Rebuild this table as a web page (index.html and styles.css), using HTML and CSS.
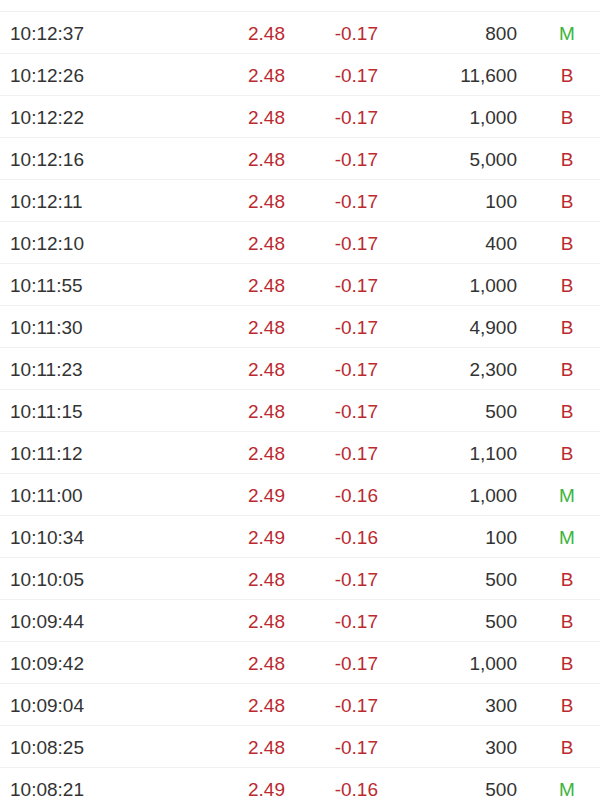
FILE: index.html
```html
<!DOCTYPE html>
<html>
<head>
<meta charset="utf-8">
<link rel="stylesheet" href="styles.css">
</head>
<body>
<div class="list">
  <div class="head"></div>
  <div class="row"><span class="t">10:12:37</span><span class="p">2.48</span><span class="c">-0.17</span><span class="v">800</span><span class="k m">M</span></div>
  <div class="row"><span class="t">10:12:26</span><span class="p">2.48</span><span class="c">-0.17</span><span class="v">11,600</span><span class="k b">B</span></div>
  <div class="row"><span class="t">10:12:22</span><span class="p">2.48</span><span class="c">-0.17</span><span class="v">1,000</span><span class="k b">B</span></div>
  <div class="row"><span class="t">10:12:16</span><span class="p">2.48</span><span class="c">-0.17</span><span class="v">5,000</span><span class="k b">B</span></div>
  <div class="row"><span class="t">10:12:11</span><span class="p">2.48</span><span class="c">-0.17</span><span class="v">100</span><span class="k b">B</span></div>
  <div class="row"><span class="t">10:12:10</span><span class="p">2.48</span><span class="c">-0.17</span><span class="v">400</span><span class="k b">B</span></div>
  <div class="row"><span class="t">10:11:55</span><span class="p">2.48</span><span class="c">-0.17</span><span class="v">1,000</span><span class="k b">B</span></div>
  <div class="row"><span class="t">10:11:30</span><span class="p">2.48</span><span class="c">-0.17</span><span class="v">4,900</span><span class="k b">B</span></div>
  <div class="row"><span class="t">10:11:23</span><span class="p">2.48</span><span class="c">-0.17</span><span class="v">2,300</span><span class="k b">B</span></div>
  <div class="row"><span class="t">10:11:15</span><span class="p">2.48</span><span class="c">-0.17</span><span class="v">500</span><span class="k b">B</span></div>
  <div class="row"><span class="t">10:11:12</span><span class="p">2.48</span><span class="c">-0.17</span><span class="v">1,100</span><span class="k b">B</span></div>
  <div class="row"><span class="t">10:11:00</span><span class="p">2.49</span><span class="c">-0.16</span><span class="v">1,000</span><span class="k m">M</span></div>
  <div class="row"><span class="t">10:10:34</span><span class="p">2.49</span><span class="c">-0.16</span><span class="v">100</span><span class="k m">M</span></div>
  <div class="row"><span class="t">10:10:05</span><span class="p">2.48</span><span class="c">-0.17</span><span class="v">500</span><span class="k b">B</span></div>
  <div class="row"><span class="t">10:09:44</span><span class="p">2.48</span><span class="c">-0.17</span><span class="v">500</span><span class="k b">B</span></div>
  <div class="row"><span class="t">10:09:42</span><span class="p">2.48</span><span class="c">-0.17</span><span class="v">1,000</span><span class="k b">B</span></div>
  <div class="row"><span class="t">10:09:04</span><span class="p">2.48</span><span class="c">-0.17</span><span class="v">300</span><span class="k b">B</span></div>
  <div class="row"><span class="t">10:08:25</span><span class="p">2.48</span><span class="c">-0.17</span><span class="v">300</span><span class="k b">B</span></div>
  <div class="row"><span class="t">10:08:21</span><span class="p">2.49</span><span class="c">-0.16</span><span class="v">500</span><span class="k m">M</span></div>
</div>
</body>
</html>
```
FILE: styles.css
```css
html, body {
  margin: 0;
  padding: 0;
  background: #ffffff;
  overflow: hidden;
}
.list {
  font-family: "Liberation Sans", Arial, sans-serif;
  font-size: 19px;
  color: #333333;
}
.head {
  height: 11px;
  border-bottom: 1px solid #f0f0f0;
}
.row {
  display: grid;
  grid-template-columns: 200px 85px 93px 139px 1fr;
  align-items: center;
  box-sizing: border-box;
  height: 42px;
  padding-top: 2px;
  border-bottom: 1px solid #f0f0f0;
}
.t {
  padding-left: 10px;
}
.p, .c {
  text-align: right;
  color: #bb2a30;
}
.v {
  text-align: right;
}
.k {
  padding-left: 17px;
  text-align: center;
}
.m {
  color: #3cb53c;
}
.b {
  color: #bb2a30;
}
```
